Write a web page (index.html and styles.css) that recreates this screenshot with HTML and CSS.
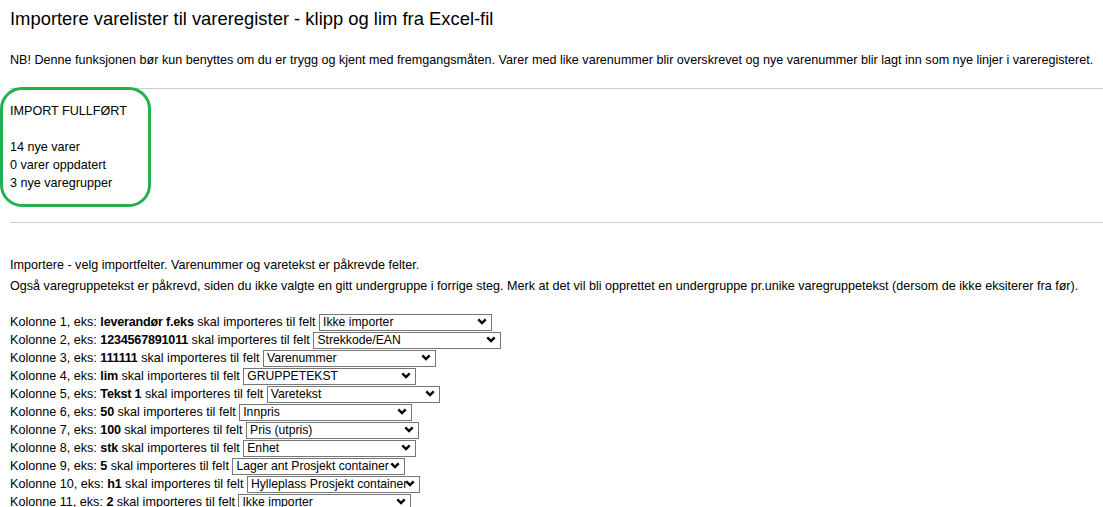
FILE: index.html
```html
<!DOCTYPE html>
<html lang="no">
<head>
    <meta charset="UTF-8">
    <title>Importere varelister</title>
    <link rel="stylesheet" href="styles.css">
</head>
<body>

    <h1>Importere varelister til vareregister - klipp og lim fra Excel-fil</h1>

    <p class="notice">NB! Denne funksjonen bør kun benyttes om du er trygg og kjent med fremgangsmåten. Varer med like varenummer blir overskrevet og nye varenummer blir lagt inn som nye linjer i vareregisteret.</p>

    <hr>

    <div class="result">
        IMPORT FULLFØRT<br>
        <br>
        14 nye varer<br>
        0 varer oppdatert<br>
        3 nye varegrupper
        <div class="mark"></div>
    </div>

    <hr>

    <div class="intro">
        <div>Importere - velg importfelter. Varenummer og varetekst er påkrevde felter.</div>
        <div>Også varegruppetekst er påkrevd, siden du ikke valgte en gitt undergruppe i forrige steg. Merk at det vil bli opprettet en undergruppe pr.unike varegruppetekst (dersom de ikke eksiterer fra før).</div>
    </div>

    <div class="columns" id="columns"></div>

    <script>
        const rows = [
            { example: "leverandør f.eks", field: "Ikke importer" },
            { example: "1234567891011", field: "Strekkode/EAN", wide: true },
            { example: "111111", field: "Varenummer" },
            { example: "lim", field: "GRUPPETEKST" },
            { example: "Tekst 1", field: "Varetekst" },
            { example: "50", field: "Innpris" },
            { example: "100", field: "Pris (utpris)" },
            { example: "stk", field: "Enhet" },
            { example: "5", field: "Lager ant Prosjekt container" },
            { example: "h1", field: "Hylleplass Prosjekt container" },
            { example: "2", field: "Ikke importer" }
        ];

        const fields = ["Ikke importer", "Varenummer", "Varetekst", "Strekkode/EAN", "GRUPPETEKST",
            "Innpris", "Pris (utpris)", "Enhet", "Lager ant Prosjekt container", "Hylleplass Prosjekt container"];

        const chevron = '<svg class="chevron" width="10" height="7" viewBox="0 0 10 7"><path d="M1.3 1.3 L5 5 L8.7 1.3" fill="none" stroke="#000" stroke-width="2.4"/></svg>';

        const container = document.getElementById("columns");

        rows.forEach((row, i) => {
            const line = document.createElement("div");
            line.className = "column-row";

            const options = fields.map(f =>
                `<option${f === row.field ? " selected" : ""}>${f}</option>`
            ).join("");

            line.innerHTML = `Kolonne ${i + 1}, eks: <b>${row.example}</b> skal importeres til felt
                <span class="select-wrap${row.wide ? " wide" : ""}"><select>${options}</select>${chevron}</span>`;
            container.appendChild(line);
        });
    </script>

</body>
</html>
```

FILE: styles.css
```css
body {
    font-family: "Liberation Sans", Arial, sans-serif;
    font-size: 12.6px;
    margin: 0;
    padding: 0 0 0 10px;
    color: #000;
    background-color: #fff;
    overflow: hidden;
}

h1 {
    font-size: 18.4px;
    font-weight: normal;
    line-height: 23px;
    margin: 0;
    padding-top: 7px;
}

.notice {
    line-height: 15px;
    margin: 23px 0 0 0;
    white-space: nowrap;
}

hr {
    border: none;
    border-top: 1px solid #cccccc;
    height: 0;
    margin: 0;
}

.notice + hr {
    margin-top: 20px;
}

.result {
    position: relative;
    line-height: 18px;
    padding: 13px 0 30px 0;
}

.mark {
    position: absolute;
    left: -10px;
    top: -2px;
    width: 145px;
    height: 114px;
    border: 3px solid #22b14c;
    border-radius: 22px;
}

.intro {
    margin-top: 32px;
    line-height: 21px;
    white-space: nowrap;
}

.columns {
    margin-top: 16px;
}

.column-row {
    line-height: 18px;
    height: 18px;
    white-space: nowrap;
}

.column-row b {
    letter-spacing: -0.2px;
}

.select-wrap {
    position: relative;
    display: inline-block;
    vertical-align: top;
    height: 18px;
}

.select-wrap select {
    appearance: none;
    -webkit-appearance: none;
    font-family: "Liberation Sans", Arial, sans-serif;
    font-size: 12.2px;
    color: #000;
    background-color: #fff;
    border: 1px solid #767676;
    border-radius: 0;
    width: 173px;
    height: 17px;
    margin: 0;
    padding: 0 10px 0 3px;
    line-height: 15px;
}

.select-wrap.wide select {
    width: 188px;
}

.chevron {
    position: absolute;
    right: 5px;
    top: 5px;
    pointer-events: none;
}
```
